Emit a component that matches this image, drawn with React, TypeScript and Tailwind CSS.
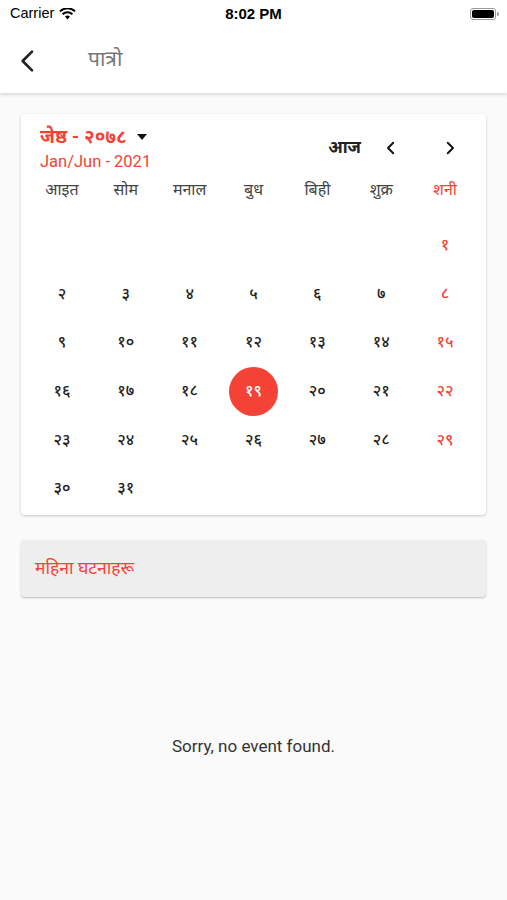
import React from "react";

const RED = "text-[#f44336]";

function Chevron({ dir, className, sw = 2.6 }: { dir: "left" | "right"; className?: string; sw?: number }) {
  return (
    <svg viewBox="0 0 24 24" className={className} fill="none" stroke="currentColor" strokeWidth={sw} strokeLinecap="round" strokeLinejoin="round">
      {dir === "left" ? <path d="M15 5 L8 12 L15 19" /> : <path d="M9 5 L16 12 L9 19" />}
    </svg>
  );
}

const days = ["आइत", "सोम", "मनाल", "बुध", "बिही", "शुक्र", "शनी"];
const nums = ["१", "२", "३", "४", "५", "६", "७", "८", "९", "१०", "११", "१२", "१३", "१४", "१५", "१६", "१७", "१८", "१९", "२०", "२१", "२२", "२३", "२४", "२५", "२६", "२७", "२८", "२९", "३०", "३१"];

export default function App() {
  const cells: (string | null)[] = [];
  for (let i = 0; i < 6; i++) cells.push(null);
  nums.forEach((n) => cells.push(n));
  while (cells.length % 7) cells.push(null);

  return (
    <div className="w-[507px] h-[900px] bg-[#fafafa] flex flex-col" style={{ fontFamily: "Roboto, 'Noto Sans', 'Noto Sans Devanagari', 'Lohit Devanagari', sans-serif" }}>
      {/* status bar */}
      <div className="bg-white h-[28px] flex items-center px-[10px] relative">
        <div className="flex items-center gap-[5px] text-[14.5px] text-black" style={{ fontFamily: "'Liberation Sans', Arial, sans-serif" }}>
          <span>Carrier</span>
          <svg width="17" height="12" viewBox="0 0 17 12">
            <path d="M8.5 11.5 L6 8.6 A3.6 3.6 0 0 1 11 8.6 Z" fill="black" />
            <path d="M3.6 6.2 A7 7 0 0 1 13.4 6.2" stroke="black" strokeWidth="2" fill="none" />
            <path d="M1 3.4 A10.8 10.8 0 0 1 16 3.4" stroke="black" strokeWidth="2" fill="none" />
          </svg>
        </div>
        <div className="absolute left-0 right-0 text-center text-[15px] font-semibold text-black pointer-events-none" style={{ fontFamily: "'Liberation Sans', Arial, sans-serif" }}>8:02 PM</div>
        <div className="ml-auto flex items-center mr-[-2px]">
          <div className="w-[26px] h-[12px] rounded-[3px] border border-[#999] p-[1px]">
            <div className="w-full h-full rounded-[2px] bg-black" />
          </div>
          <div className="w-[2px] h-[4px] bg-[#999] rounded-r-sm ml-[1px]" />
        </div>
      </div>
      {/* nav bar */}
      <div className="bg-white h-[65px] flex items-center shadow-[0_2px_3px_rgba(0,0,0,0.12)] relative z-10">
        <Chevron dir="left" sw={2} className="w-[32px] h-[32px] ml-[12px] text-[#222]" />
        <span className="ml-[44px] text-[21px] text-[#777] mt-[-2px]">पात्रो</span>
      </div>

      {/* calendar card */}
      <div className="mx-[21px] mt-[21px] bg-white rounded-[4px] shadow-[0_1px_3px_rgba(0,0,0,0.2)] px-[9px] pt-[10px] pb-[2px]">
        <div className="flex items-start px-[10px]">
          <div className="flex flex-col">
            <div className="flex items-center h-[26px]">
              <span className={`text-[19px] font-bold ${RED}`}>जेष्ठ - २०७८</span>
              <svg width="12" height="8" viewBox="0 0 12 8" className="ml-[9px]"><path d="M1 1 L11 1 L6 7 Z" fill="#111" /></svg>
            </div>
            <span className={`text-[16.5px] ${RED} leading-[20px] mt-[2px]`}>Jan/Jun - 2021</span>
          </div>
          <div className="ml-auto flex items-center mt-[11px]">
            <span className="text-[17px] font-bold text-[#222]">आज</span>
            <Chevron dir="left" className="w-[18px] h-[18px] ml-[21px] text-[#111]" />
            <Chevron dir="right" className="w-[18px] h-[18px] ml-[41px] mr-[8px] text-[#111]" />
          </div>
        </div>
        <div className="grid grid-cols-7 mt-[5px]">
          {days.map((d, i) => (
            <div key={d} className={`text-center text-[16px] h-[26px] leading-[26px] ${i === 6 ? RED : "text-[#444]"}`}>{d}</div>
          ))}
        </div>
        <div className="grid grid-cols-7 mt-[18px]">
          {cells.map((c, i) => (
            <div key={i} className="h-[48.6px] flex items-center justify-center">
              {c && (
                c === "१९" ? (
                  <div className="w-[49px] h-[49px] rounded-full bg-[#f44336] flex items-center justify-center text-white text-[16px] font-medium">{c}</div>
                ) : (
                  <span className={`text-[16px] font-medium ${i % 7 === 6 ? RED : "text-[#222]"}`}>{c}</span>
                )
              )}
            </div>
          ))}
        </div>
      </div>

      {/* events header */}
      <div className="mx-[21px] mt-[25px] h-[57px] bg-[#eeeeee] rounded-[4px] shadow-[0_1px_2px_rgba(0,0,0,0.25)] flex items-center px-[14px]">
        <span className={`text-[17.5px] ${RED}`}>महिना घटनाहरू</span>
      </div>

      <div className="mt-[137px] text-center text-[17px] text-[#333]">Sorry, no event found.</div>
    </div>
  );
}
